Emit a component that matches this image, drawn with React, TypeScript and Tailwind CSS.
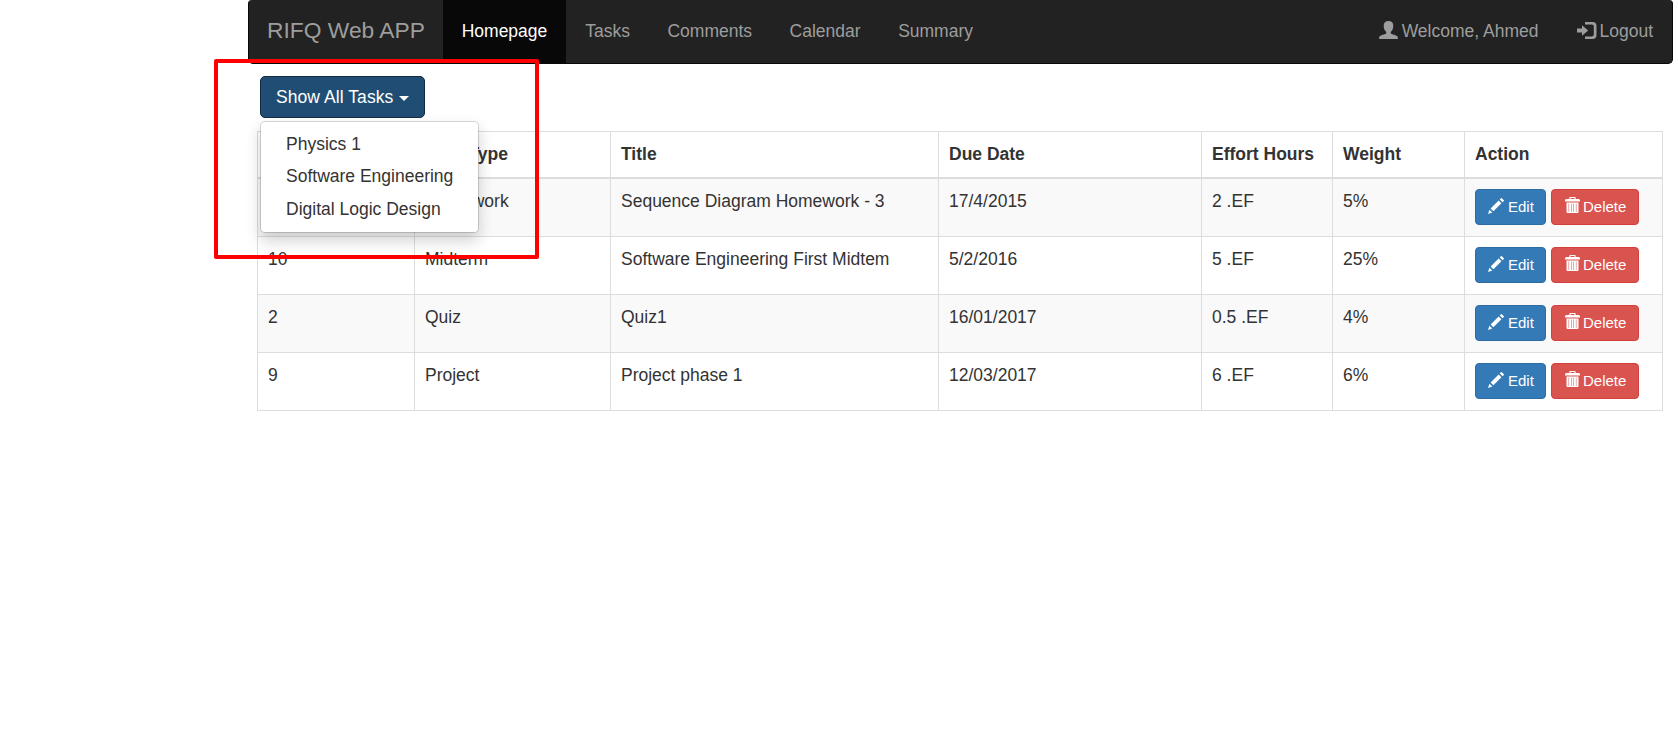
import React from "react";

function UserIcon() {
  return (
    <svg className="mb-[2px] h-[18px] w-[19px] shrink-0" viewBox="0 0 19 18" fill="currentColor">
      <path d="M9.500 0C6.300 0 4.700 1.900 4.700 4.800c0 2.800 1.100 5 2.500 6.200v1.500C7 13.300.7 14 .2 16V18h18.600v-2c-.5-2-6.800-2.700-7-3.500V11c1.400-1.200 2.500-3.400 2.500-6.200C14.300 1.900 12.700 0 9.500 0z" />
    </svg>
  );
}

function LoginIcon() {
  return (
    <svg className="mb-px h-[17px] w-[20px] shrink-0" viewBox="0 0 20 17" fill="currentColor">
      <path d="M8 0h7.500a4 4 0 0 1 4 4v9a4 4 0 0 1-4 4H8v-2.600h7a1.800 1.800 0 0 0 1.800-1.800V4.400A1.800 1.800 0 0 0 15 2.600H8z" />
      <path d="M5 3.300 11.200 8.500 5 13.700v-3.200H0v-4h5z" />
    </svg>
  );
}

function PencilIcon() {
  return (
    <svg className="mb-px h-[16px] w-[16px] shrink-0" viewBox="-16 -1210 1226 1226" fill="currentColor">
      <path
        transform="scale(1,-1)"
        d="M1011 1210q19 0 33 -13l153 -153q13 -14 13 -33t-13 -33l-99 -92l-214 214l95 96q13 14 32 14zM1013 800l-615 -614l-214 214l614 614zM317 96l-333 -112l110 335z"
      />
    </svg>
  );
}

function TrashIcon() {
  return (
    <svg className="mb-[2px] h-[16px] w-[15px] shrink-0" viewBox="0 0 15 16" fill="currentColor" fillRule="evenodd">
      <path d="M4.300 2V1a1 1 0 0 1 1-1h4.400a1 1 0 0 1 1 1v1H14l1 1v1.500H0V3l1-1zM5.500 2h4V1.100h-4z" />
      <path d="M1.500 5.500h12V15a1 1 0 0 1-1 1h-10a1 1 0 0 1-1-1zM3.600 6.500V15h.5V6.500zm2.400 0V15h.5V6.500zm2.500 0V15h.5V6.500zm2.400 0V15h.5V6.500z" />
    </svg>
  );
}

const navItems = ["Tasks", "Comments", "Calendar", "Summary"];
const subjects = ["Physics 1", "Software Engineering", "Digital Logic Design"];
const columns = [
  { label: "#", width: "w-[157px]" },
  { label: "Task Type", width: "w-[196px]" },
  { label: "Title", width: "w-[328px]" },
  { label: "Due Date", width: "w-[263px]" },
  { label: "Effort Hours", width: "w-[131px]" },
  { label: "Weight", width: "w-[132px]" },
  { label: "Action", width: "w-[198px]" },
];
const tasks = [
  ["1", "Homework", "Sequence Diagram Homework - 3", "17/4/2015", "2 .EF", "5%"],
  ["10", "Midterm", "Software Engineering First Midtem", "5/2/2016", "5 .EF", "25%"],
  ["2", "Quiz", "Quiz1", "16/01/2017", "0.5 .EF", "4%"],
  ["9", "Project", "Project phase 1", "12/03/2017", "6 .EF", "6%"],
];

export default function App() {
  return (
    <div className="relative h-[745px] w-[1678px] overflow-hidden bg-white pl-[248px] font-['Liberation_Sans',Arial,sans-serif] text-[17.5px] leading-[25px] text-[#333]">
      <nav className="flex h-16 w-[1425px] justify-between rounded-[5px] rounded-t-[4px] border border-t-0 border-[#080808] bg-[#222] text-[#9d9d9d]">
        <div className="flex">
          <a className="flex w-[194px] items-center pl-[18px] pb-[2px] text-[22.8px]">RIFQ Web APP</a>
          <a className="mr-[0.5px] flex w-[123px] items-center justify-center bg-[#080808] pb-px text-white">
            Homepage
          </a>
          {navItems.map((item) => (
            <a key={item} className="flex items-center px-[18.75px] pb-px">
              {item}
            </a>
          ))}
        </div>
        <div className="flex pr-[19px]">
          <a className="flex items-center gap-[4px] pr-[39px] pb-px">
            <UserIcon />
            Welcome, Ahmed
          </a>
          <a className="flex items-center gap-[2px] pb-px">
            <LoginIcon />
            Logout
          </a>
        </div>
      </nav>

      <div className="relative ml-3 mt-3 w-[165px]">
        <button className="flex h-[42px] w-[165px] items-center rounded-[5px] border border-[#122b40] bg-[#204d74] pl-[15px] tracking-[0.07px] text-white">
          Show All Tasks
          <span className="ml-[6px] mt-[3px] border-x-[5px] border-t-[5px] border-x-transparent border-t-white" />
        </button>
        <ul className="absolute left-0 top-[45px] z-10 h-[112px] w-[219px] rounded-[5px] border border-black/15 bg-white bg-clip-padding py-[6px] shadow-[0_7.5px_15px_rgba(0,0,0,0.175)]">
          {subjects.map((subject) => (
            <li key={subject} className="h-[32.5px] pl-[25px] pt-[3.75px] whitespace-nowrap">
              {subject}
            </li>
          ))}
        </ul>
      </div>

      <table className="ml-[9px] mt-[13px] w-[1406px] table-fixed border-separate border-spacing-0 border-l border-t border-[#ddd]">
        <thead>
          <tr className="h-[47px]">
            {columns.map((column) => (
              <th
                key={column.label}
                className={`${column.width} border-b-2 border-r border-[#ddd] p-[10px] text-left align-top font-bold`}
              >
                {column.label}
              </th>
            ))}
          </tr>
        </thead>
        <tbody>
          {tasks.map((task) => (
            <tr key={task[0]} className="h-[58px] odd:bg-[#f9f9f9]">
              {task.map((value, index) => (
                <td key={index} className="border-b border-r border-[#ddd] px-[10px] pt-[10px] pb-0 align-top">
                  {value}
                </td>
              ))}
              <td className="border-b border-r border-[#ddd] px-[10px] pt-[10px] pb-0 align-top">
                <div className="flex gap-[5px] text-[15px] text-white">
                  <button className="flex h-9 w-[71px] items-center gap-1 rounded-[4px] border border-[#2e6da4] bg-[#337ab7] pl-3 pb-[2px]">
                    <PencilIcon />
                    Edit
                  </button>
                  <button className="flex h-9 w-[88px] items-center gap-[3px] rounded-[4px] border border-[#d43f3a] bg-[#d9534f] pl-[13px] pb-[2px]">
                    <TrashIcon />
                    Delete
                  </button>
                </div>
              </td>
            </tr>
          ))}
        </tbody>
      </table>

      <div className="absolute left-[214px] top-[59px] z-20 h-[200px] w-[325px] rounded-[2px] border-4 border-[#ff0000]" />
    </div>
  );
}
